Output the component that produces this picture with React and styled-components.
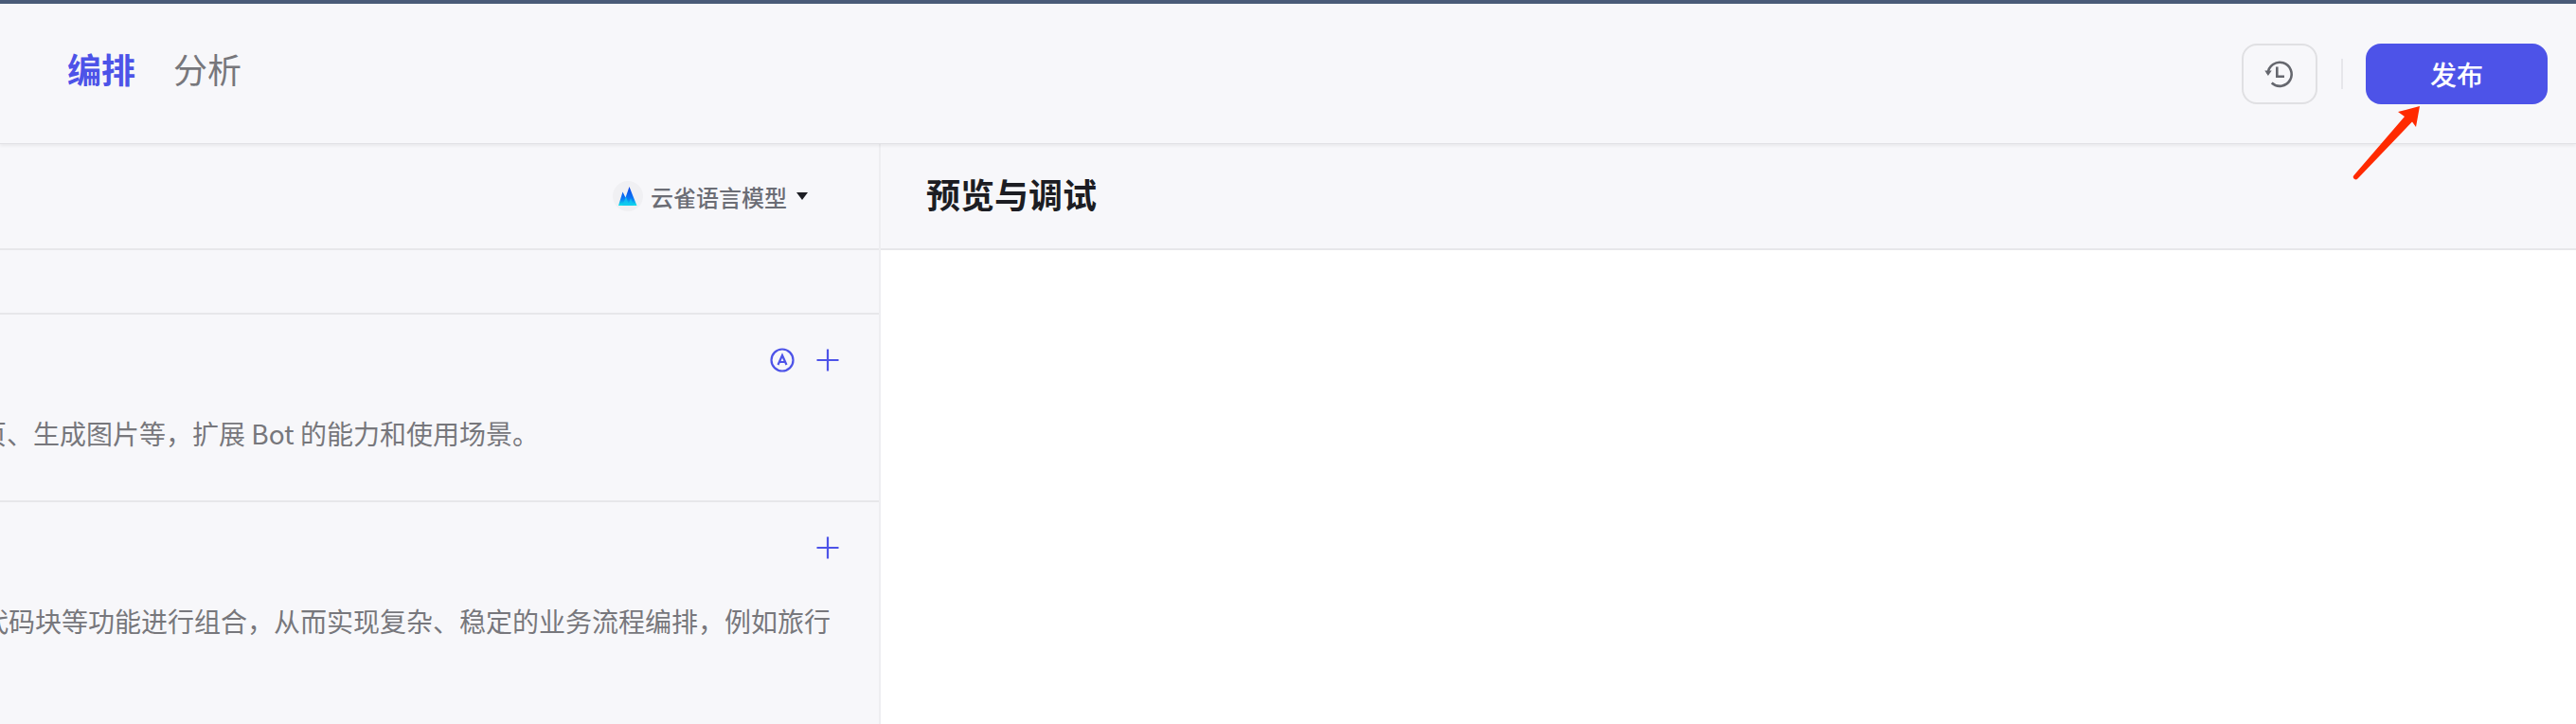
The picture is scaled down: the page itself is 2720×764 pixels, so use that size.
import React from "react";
import styled, { createGlobalStyle } from "styled-components";

const Global = createGlobalStyle`
  html, body { margin: 0; padding: 0; background: #fff; }
  body { font-family: "Noto Sans CJK SC", "Inter", sans-serif; }
`;
const Page = styled.div`
  position: relative; width: 2720px; height: 764px; overflow: hidden;
  display: flex; flex-direction: column; background: #fff;
`;
const TopStrip = styled.div`height: 4px; flex: none; background: #4a5b78;`;
const Header = styled.header`
  height: 148px; flex: none; box-sizing: border-box; background: #f7f7fa;
  display: flex; align-items: center; padding: 0 30px 0 71px;
  border-bottom: 1px solid #e2e2e6; box-shadow: 0 2px 3px rgba(0,0,0,.06); position: relative; z-index: 1;
`;
const Tabs = styled.nav`display: flex; gap: 40px; margin-top: -12px;`;
const Tab = styled.span`
  font-size: 36px; line-height: 48px;
  font-weight: ${p => (p.$active ? 700 : 400)};
  color: ${p => (p.$active ? "#4d53e8" : "#77777c")};
`;
const Actions = styled.div`margin-left: auto; display: flex; align-items: center;`;
const IconButton = styled.button`
  width: 80px; height: 64px; box-sizing: border-box; border: 2px solid #e0e0e3; border-radius: 16px;
  background: transparent; display: flex; align-items: center; justify-content: center; padding: 0;
`;
const Divider = styled.div`width: 2px; height: 32px; background: #e6e6ea; margin: 0 24px 0 25px;`;
const Publish = styled.button`
  width: 192px; height: 64px; border: 0; border-radius: 16px; background: #4d53e8; color: #fff;
  font: 500 28px/1 "Noto Sans CJK SC", sans-serif;
`;
const Body = styled.main`flex: 1; display: flex; min-height: 0;`;
const LeftPanel = styled.section`
  width: 930px; flex: none; box-sizing: border-box; background: #f7f7fa;
  border-right: 2px solid #eeeef1; display: flex; flex-direction: column; overflow: hidden;
`;
const RightPanel = styled.section`flex: 1; background: #fff;`;
const PanelHead = styled.div`
  height: 112px; flex: none; box-sizing: border-box; border-bottom: 2px solid #e7e7ea; background: #f7f7fa;
  display: flex; align-items: center;
`;
const ModelHead = styled(PanelHead)`justify-content: flex-end; padding-right: 75px;`;
const PreviewHead = styled(PanelHead)`padding: 0 0 6px 48px;`;
const Title = styled.h2`margin: 0; font-size: 36px; line-height: 48px; font-weight: 700; color: #1c1d23;`;
const Model = styled.div`display: flex; align-items: center; font-size: 24px; font-weight: 500; color: #6b6d75;`;
const Logo = styled.span`
  width: 32px; height: 32px; border-radius: 50%; background: #f0f0f3;
  display: flex; align-items: center; justify-content: center; margin-right: 8px;
`;
const Caret = styled.span`
  width: 0; height: 0; margin-left: 10px;
  border-left: 6.5px solid transparent; border-right: 6.5px solid transparent; border-top: 8px solid #1c1d23;
`;
const Spacer = styled.div`height: 68px; flex: none; box-sizing: border-box; border-bottom: 2px solid #e7e7ea;`;
const Block = styled.div`
  height: ${p => p.$h}px; flex: none; box-sizing: border-box; display: flex; flex-direction: column;
  border-bottom: ${p => (p.$last ? "0" : "2px solid #e7e7ea")};
`;
const BlockActions = styled.div`
  display: flex; justify-content: flex-end; align-items: center; gap: 23px;
  height: 24px; margin-top: 36px; padding-right: 42px;
`;
const Desc = styled.p`
  margin: 45px 0 0 ${p => p.$shift}px; width: 1000px; font-size: 28px; line-height: 40px;
  color: #77777c; white-space: nowrap;
`;
const Arrow = styled.svg`position: absolute; left: 2480px; top: 100px; z-index: 2;`;

const Plus = () => (
  <svg width="24" height="24" viewBox="0 0 24 24" fill="none" stroke="#4d53e8" strokeWidth="2.2">
    <path d="M0.5 12H23.5M12 0.5V23.5" />
  </svg>
);
const AutoIcon = () => (
  <svg width="26" height="26" viewBox="0 0 26 26" fill="none" stroke="#4d53e8">
    <circle cx="13" cy="13" r="11.5" strokeWidth="2.2" />
    <path d="M8.5 18L13 8L17.5 18M10 15H16" strokeWidth="2.2" />
  </svg>
);
const HistoryIcon = () => (
  <svg width="44" height="44" viewBox="1.5 0 44 44" fill="none" stroke="#65676e" strokeWidth="2.6">
    <path d="M11.2 21.5A12.5 12.5 0 1 1 15.2 31.5" />
    <path d="M7.8 18.6H15.2L11.4 24Z" fill="#65676e" stroke="none" />
    <path d="M20.8 14.5V24.8H28.5" />
  </svg>
);
const SparkLogo = () => (
  <svg width="20" height="20" viewBox="0 0 20 20">
    <defs>
      <linearGradient id="g" x1="0" y1="0" x2="0" y2="1">
        <stop offset="0" stopColor="#0b3fe6" />
        <stop offset=".65" stopColor="#0a7cf5" />
        <stop offset="1" stopColor="#12e6e8" />
      </linearGradient>
    </defs>
    <path d="M0 20L4.5 5.5L7.5 11.5L11.5 0L15 9L19.5 20Z" fill="url(#g)" />
    <path d="M4 20L8 10.5L11.5 20ZM10 20L13 12L16 20Z" fill="#12c8f0" opacity=".75" />
  </svg>
);

export default function App() {
  return (
    <Page>
      <Global />
      <TopStrip />
      <Header>
        <Tabs>
          <Tab $active>编排</Tab>
          <Tab>分析</Tab>
        </Tabs>
        <Actions>
          <IconButton aria-label="history"><HistoryIcon /></IconButton>
          <Divider />
          <Publish>发布</Publish>
        </Actions>
      </Header>
      <Body>
        <LeftPanel>
          <ModelHead>
            <Model>
              <Logo><SparkLogo /></Logo>
              云雀语言模型
              <Caret />
            </Model>
          </ModelHead>
          <Spacer />
          <Block $h={198}>
            <BlockActions><AutoIcon /><Plus /></BlockActions>
            <Desc $shift={-21}>页、生成图片等，扩展 Bot 的能力和使用场景。</Desc>
          </Block>
          <Block $last $h={236}>
            <BlockActions><Plus /></BlockActions>
            <Desc $shift={-19}>代码块等功能进行组合，从而实现复杂、稳定的业务流程编排，例如旅行</Desc>
          </Block>
        </LeftPanel>
        <RightPanel>
          <PreviewHead><Title>预览与调试</Title></PreviewHead>
        </RightPanel>
      </Body>
      <Arrow width="85" height="95" viewBox="0 0 85 95">
        <path d="M5.5 85L59 23L52 18L75 12L71 34L67 28.5L9.5 88.5A2.5 2.5 0 0 1 5.5 85Z" fill="#ff2a00" />
      </Arrow>
    </Page>
  );
}
